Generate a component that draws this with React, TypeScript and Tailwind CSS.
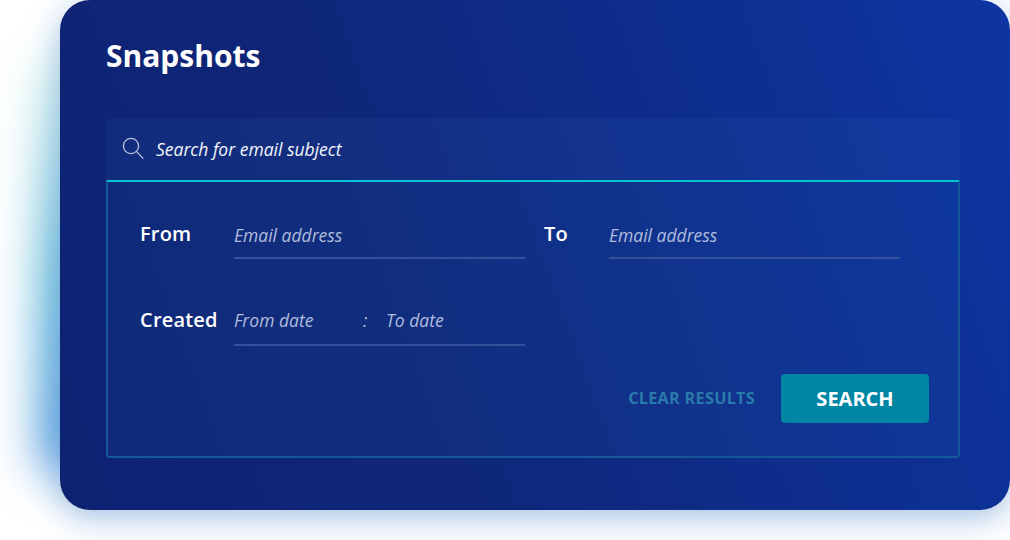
function SearchIcon() {
  return (
    <svg width="24" height="24" viewBox="0 0 24 24" fill="none" stroke="#b8c2d8" strokeWidth="1.3" className="mr-[11px] -mt-[2px]">
      <circle cx="10" cy="10" r="7.6" />
      <path d="M15.4 15.4 L22 22.4" strokeLinecap="round" />
    </svg>
  );
}

function Field({ label, placeholder, labelWidth }: { label: string; placeholder: string; labelWidth: string }) {
  return (
    <div className="flex items-start">
      <div className={`${labelWidth} text-[20px] leading-[28px] font-semibold text-white tracking-[0.2px]`}>{label}</div>
      <div className="w-[291px] h-[39px] border-b-2 border-[#35509b] pt-[1px] text-[17.5px] leading-[28px] italic text-[#b0bcdc]">
        {placeholder}
      </div>
    </div>
  );
}

export default function App() {
  return (
    <div className="relative w-[1010px] h-[540px] overflow-hidden bg-white font-['Open_Sans',sans-serif]">
      <div className="absolute left-[40px] top-[56px] w-[50px] h-[415px] bg-gradient-to-b from-[#d8f5ee] via-[#62bcd8] to-[#4a96de] blur-[24px]" />
      <div className="relative ml-[60px] w-[950px] h-[510px] rounded-[30px] px-[46px] bg-[linear-gradient(70deg,#0e2272,#0f2678_35%,#0d35a2)] shadow-[0_8px_32px_rgba(40,110,190,0.42)]">
        <h1 className="pt-[36px] h-[118px] text-[30px] leading-[40px] font-bold text-white">Snapshots</h1>
        <div className="w-[854px]">
          <div className="h-[62px] rounded-t-[6px] bg-[#3a7ac0]/[0.1] flex items-center pl-[15px] text-white">
            <SearchIcon />
            <span className="text-[17.5px] leading-[24px] italic text-[#f2f5fb]">Search for email subject</span>
          </div>
          <div className="h-[278px] border-t-2 border-t-[#00c4cf] border-x-2 border-b-2 border-x-[#14589a] border-b-[#14589a] rounded-b-[4px] bg-[#2a7ac0]/[0.09] pl-[32px] pr-[29px] pt-[38px]">
            <div className="flex">
              <Field label="From" placeholder="Email address" labelWidth="w-[94px]" />
              <div className="ml-[19px]">
                <Field label="To" placeholder="Email address" labelWidth="w-[65px]" />
              </div>
            </div>
            <div className="flex mt-[47px]">
              <div className="w-[94px] text-[20px] leading-[28px] font-semibold text-white tracking-[0.2px]">Created</div>
              <div className="w-[291px] h-[40px] border-b-2 border-[#35509b] text-[17.5px] leading-[28px] italic text-[#b0bcdc] flex">
                <span className="w-[129px]">From date</span>
                <span className="w-[23px]">:</span>
                <span>To date</span>
              </div>
            </div>
            <div className="flex justify-end items-center mt-[28px]">
              <span className="text-[16.2px] font-bold text-[#2a7bab] tracking-[0.3px] mr-[26px]">CLEAR RESULTS</span>
              <button className="w-[148px] h-[49px] rounded-[4px] bg-[#0086a3] text-white text-[20px] font-bold">SEARCH</button>
            </div>
          </div>
        </div>
      </div>
    </div>
  );
}
